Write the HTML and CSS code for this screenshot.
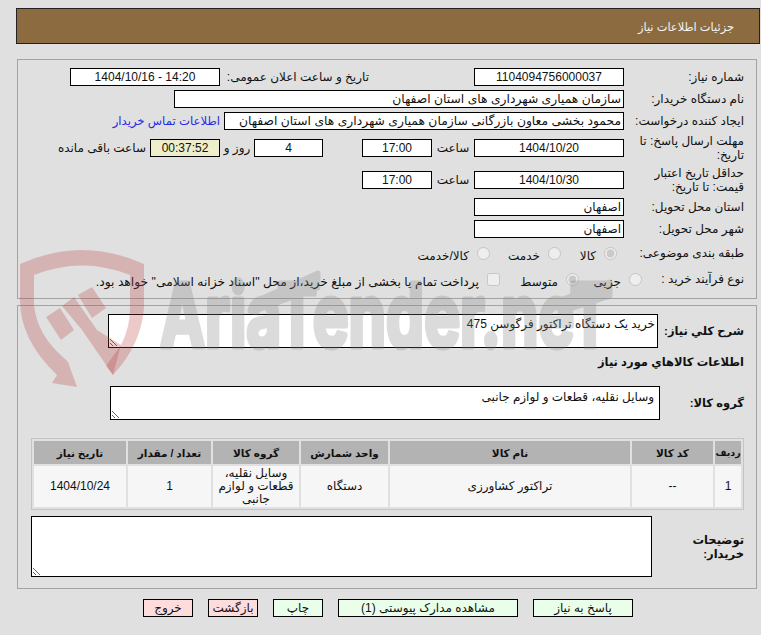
FILE: index.html
```html
<!DOCTYPE html>
<html lang="fa" dir="rtl">

<head>
    <meta charset="UTF-8">
    <title>جزئیات اطلاعات نیاز</title>
    <link rel="stylesheet" href="styles.css">
</head>

<body>

    <div class="page">
        <header class="title-bar">جزئیات اطلاعات نیاز</header>

        <section class="panel info">
            <div class="row">
                <span class="label">شماره نیاز:</span>
                <span class="field w150">1104094756000037</span>
                <span class="label-public">تاریخ و ساعت اعلان عمومی:</span>
                <span class="field w150 ltr">1404/10/16 - 14:20</span>
            </div>
            <div class="row">
                <span class="label">نام دستگاه خریدار:</span>
                <span class="field w450 start long-text">سازمان همیاری شهرداری های استان اصفهان</span>
            </div>
            <div class="row">
                <span class="label">ایجاد کننده درخواست:</span>
                <span class="field w400 start long-text">محمود بخشی معاون بازرگانی سازمان همیاری شهرداری های استان اصفهان</span>
                <a class="contact" href="#">اطلاعات تماس خریدار</a>
            </div>
            <div class="row tall">
                <span class="label">مهلت ارسال پاسخ: تا تاریخ:</span>
                <span class="field w150">1404/10/20</span>
                <span class="unit w42">ساعت</span>
                <span class="field w70">17:00</span>
                <span class="field w69 days">4</span>
                <span class="unit w34">روز و</span>
                <span class="field w70 timer">00:37:52</span>
                <span class="remain">ساعت باقی مانده</span>
            </div>
            <div class="row tall">
                <span class="label">حداقل تاریخ اعتبار قیمت: تا تاریخ:</span>
                <span class="field w150">1404/10/30</span>
                <span class="unit w42">ساعت</span>
                <span class="field w70">17:00</span>
            </div>
            <div class="row">
                <span class="label">استان محل تحویل:</span>
                <span class="field w150 start">اصفهان</span>
            </div>
            <div class="row">
                <span class="label">شهر محل تحویل:</span>
                <span class="field w150 start">اصفهان</span>
            </div>
            <div class="row options">
                <span class="label w127">طبقه بندی موضوعی:</span>
                <label class="option w56"><input type="radio" name="cat" checked disabled>کالا</label>
                <label class="option w71"><input type="radio" name="cat" disabled>خدمت</label>
                <label class="option"><input type="radio" name="cat" disabled>کالا/خدمت</label>
            </div>
            <div class="row options">
                <span class="label w102">نوع فرآیند خرید :</span>
                <label class="option w63"><input type="radio" name="kind" disabled>جزیی</label>
                <label class="option w79"><input type="radio" name="kind" checked disabled>متوسط</label>
                <label class="option long-text"><input type="checkbox" disabled>پرداخت تمام یا بخشی از مبلغ خرید،از محل "اسناد خزانه اسلامی" خواهد بود.</label>
            </div>
        </section>

        <section class="panel details">
            <div class="text-row">
                <span class="label-bold w86">شرح کلي نياز:</span>
                <textarea class="box-desc">خرید یک دستگاه تراکتور فرگوسن 475</textarea>
            </div>
            <h2 class="sub-title">اطلاعات کالاهاي مورد نياز</h2>
            <div class="text-row group-row">
                <span class="label-bold w84">گروه کالا:</span>
                <textarea class="box-desc">وسایل نقلیه، قطعات و لوازم جانبی</textarea>
            </div>

            <table class="items">
                <colgroup>
                    <col class="c26">
                    <col class="c81">
                    <col class="c240">
                    <col class="c87">
                    <col class="c86">
                    <col class="c83">
                    <col class="c92">
                </colgroup>
                <thead>
                    <tr>
                        <th class="narrow">ردیف</th>
                        <th>کد کالا</th>
                        <th>نام کالا</th>
                        <th>واحد شمارش</th>
                        <th>گروه کالا</th>
                        <th>تعداد / مقدار</th>
                        <th>تاریخ نیاز</th>
                    </tr>
                </thead>
                <tbody>
                    <tr>
                        <td>1</td>
                        <td>--</td>
                        <td>تراکتور کشاورزی</td>
                        <td>دستگاه</td>
                        <td>وسایل نقلیه، قطعات و لوازم جانبی</td>
                        <td>1</td>
                        <td>1404/10/24</td>
                    </tr>
                </tbody>
            </table>

            <div class="text-row note-row">
                <span class="label-bold w92">توضیحات خریدار:</span>
                <textarea class="box-note"></textarea>
            </div>
        </section>

        <nav class="actions">
            <button class="btn ok w100">پاسخ به نیاز</button>
            <button class="btn ok w180">مشاهده مدارک پیوستی (1)</button>
            <button class="btn ok w50">چاپ</button>
            <button class="btn no w50">بازگشت</button>
            <button class="btn no w50">خروج</button>
        </nav>
    </div>

    <!-- watermark lies over the whole page -->
    <svg class="watermark" viewBox="0 0 761 635" aria-hidden="true">
        <g class="mark-red">
            <path d="M20 264 Q82 236 144 264 L144 308 Q141 345 113 375 L106 366 L121 345 Q130 328 130 308 L130 275 Q82 256 34 275 L34 305 Q37 335 64 358 L68 362 L77 387 L52 383 L57 375 Q20 340 20 300 Z" />
            <path d="M46 317 L60 308 L74 330 L61 340 Z" />
            <path d="M62 306 L74 297 L97 330 L121 345 L113 375 L82 330 Z" />
            <path d="M78 295 L92 287 L106 308 L92 318 Z" />
        </g>
        <g class="mark-grey">
            <text x="160" y="347" textLength="450" lengthAdjust="spacingAndGlyphs">AriaTender.neT</text>
            <path d="M258 300 L318 273 L318 288 L258 310 Z" />
            <path d="M560 300 L610 282 L610 296 L560 312 Z" />
        </g>
    </svg>

</body>

</html>
```

FILE: styles.css
```css
body {
    margin: 0;
    background-color: #e0e0e0;
    color: #111;
    font-family: "Liberation Sans", "DejaVu Sans", sans-serif;
    font-size: 12px;
}

.page {
    width: 744px;
    margin-right: 1px;
    padding-top: 8px;
}

.title-bar {
    height: 36px;
    box-sizing: border-box;
    padding-right: 25px;
    font-size: 11.4px;
    line-height: 37px;
    background-color: #8b6b3f;
    border: 1px solid #222;
    color: #f4f4f4;
}

.panel {
    width: 740px;
    box-sizing: border-box;
    margin-left: 1px;
    margin-right: 3px;
    border: 1px solid #a3a3a3;
}

.info {
    display: flex;
    flex-direction: column;
    gap: 4px;
    margin-top: 15px;
    padding: 8px 12px 8px 0;
}

.row {
    display: flex;
    align-items: center;
    min-height: 18px;
}

.tall {
    height: 28px;
}

.options {
    height: 22px;
}

.label {
    width: 120px;
    flex-shrink: 0;
    line-height: 14px;
}

.label.w127 { width: 127px; }
.label.w102 { width: 102px; }

.label-public {
    width: 149px;
    margin-right: 105px;
}

.field {
    display: block;
    height: 18px;
    box-sizing: border-box;
    border: 1px solid #000;
    background-color: #fff;
    line-height: 16px;
    text-align: center;
    white-space: nowrap;
    overflow: hidden;
}

.start {
    padding-right: 2px;
    text-align: right;
}

.long-text {
    font-size: 12.3px;
}

.ltr {
    direction: ltr;
}

.w150 { width: 150px; }
.w450 { width: 450px; }
.w400 { width: 400px; }
.w70 { width: 70px; }
.w69 { width: 69px; }
.w42 { width: 42px; }
.w34 { width: 34px; }
.w56 { width: 56px; }
.w71 { width: 71px; }
.w63 { width: 63px; }
.w79 { width: 79px; }
.w86 { width: 86px; }
.w84 { width: 84px; }
.w92 { width: 92px; }
.w100 { width: 100px; }
.w180 { width: 180px; }
.w50 { width: 50px; }

.unit {
    text-align: center;
}

.days {
    margin-right: 39px;
}

.timer {
    background-color: #eeeecc;
}

.remain {
    margin-right: 4px;
}

.contact {
    margin-right: 4px;
    color: #2a2ae6;
    font-size: 11.7px;
    text-decoration: none;
}

.option {
    display: flex;
    align-items: center;
    flex-shrink: 0;
    padding-top: 5px;
    white-space: nowrap;
}

.option input {
    margin: -5px 0 0 8px;
    width: 13px;
    height: 13px;
}

.details {
    margin-top: 6px;
    padding: 8px 12px 11px 0;
}

.text-row {
    display: flex;
    align-items: center;
}

.label-bold {
    flex-shrink: 0;
    font-size: 11.5px;
    font-weight: bold;
    line-height: 14px;
}

textarea {
    display: block;
    box-sizing: border-box;
    border: 1px solid #000;
    border-radius: 0;
    margin: 0;
    padding: 2px;
    background-color: #fff;
    color: #111;
    font: inherit;
    outline: none;
}

.box-desc {
    width: 550px;
    height: 34px;
}

.box-note {
    width: 621px;
    height: 61px;
}

.sub-title {
    margin: 7px 0 0;
    height: 14px;
    font-size: 11.5px;
    line-height: 14px;
}

.group-row {
    margin-top: 17px;
}

.group-row textarea {
    padding: 3px 5px 0 0;
}

.items {
    width: 713px;
    margin-top: 18px;
    table-layout: fixed;
    border-collapse: separate;
    border-spacing: 2px;
    border: 1px solid #c4c4c4;
}

.c26 { width: 26px; }
.c81 { width: 81px; }
.c240 { width: 240px; }
.c87 { width: 87px; }
.c86 { width: 86px; }
.c83 { width: 83px; }
.c92 { width: 92px; }

.items th {
    height: 23px;
    padding: 0;
    background-color: #b3b3b3;
    font-size: 10.5px;
}

.items th.narrow {
    font-size: 9.5px;
}

.items td {
    height: 41px;
    padding: 0 4px;
    background-color: #f6f6f6;
    line-height: 13px;
    text-align: center;
}

.note-row {
    margin-top: 6px;
}

.actions {
    display: flex;
    justify-content: center;
    gap: 15px;
    margin-top: 10px;
}

.btn {
    height: 18px;
    box-sizing: border-box;
    padding: 0;
    border: 1px solid #000;
    color: #111;
    font: inherit;
    line-height: 15px;
}

.ok {
    background-color: #eaffea;
}

.no {
    background-color: #ffdcdc;
}

.watermark {
    position: absolute;
    top: 0;
    left: 0;
    width: 761px;
    height: 635px;
    direction: ltr;
    pointer-events: none;
}

.mark-red path {
    fill: rgba(190, 60, 60, .27);
}

.mark-grey {
    opacity: .28;
    fill: #828282;
    stroke: #828282;
    stroke-width: 5px;
    stroke-linejoin: round;
    font-family: "Inter", sans-serif;
    font-size: 88px;
    font-weight: bold;
}
```
